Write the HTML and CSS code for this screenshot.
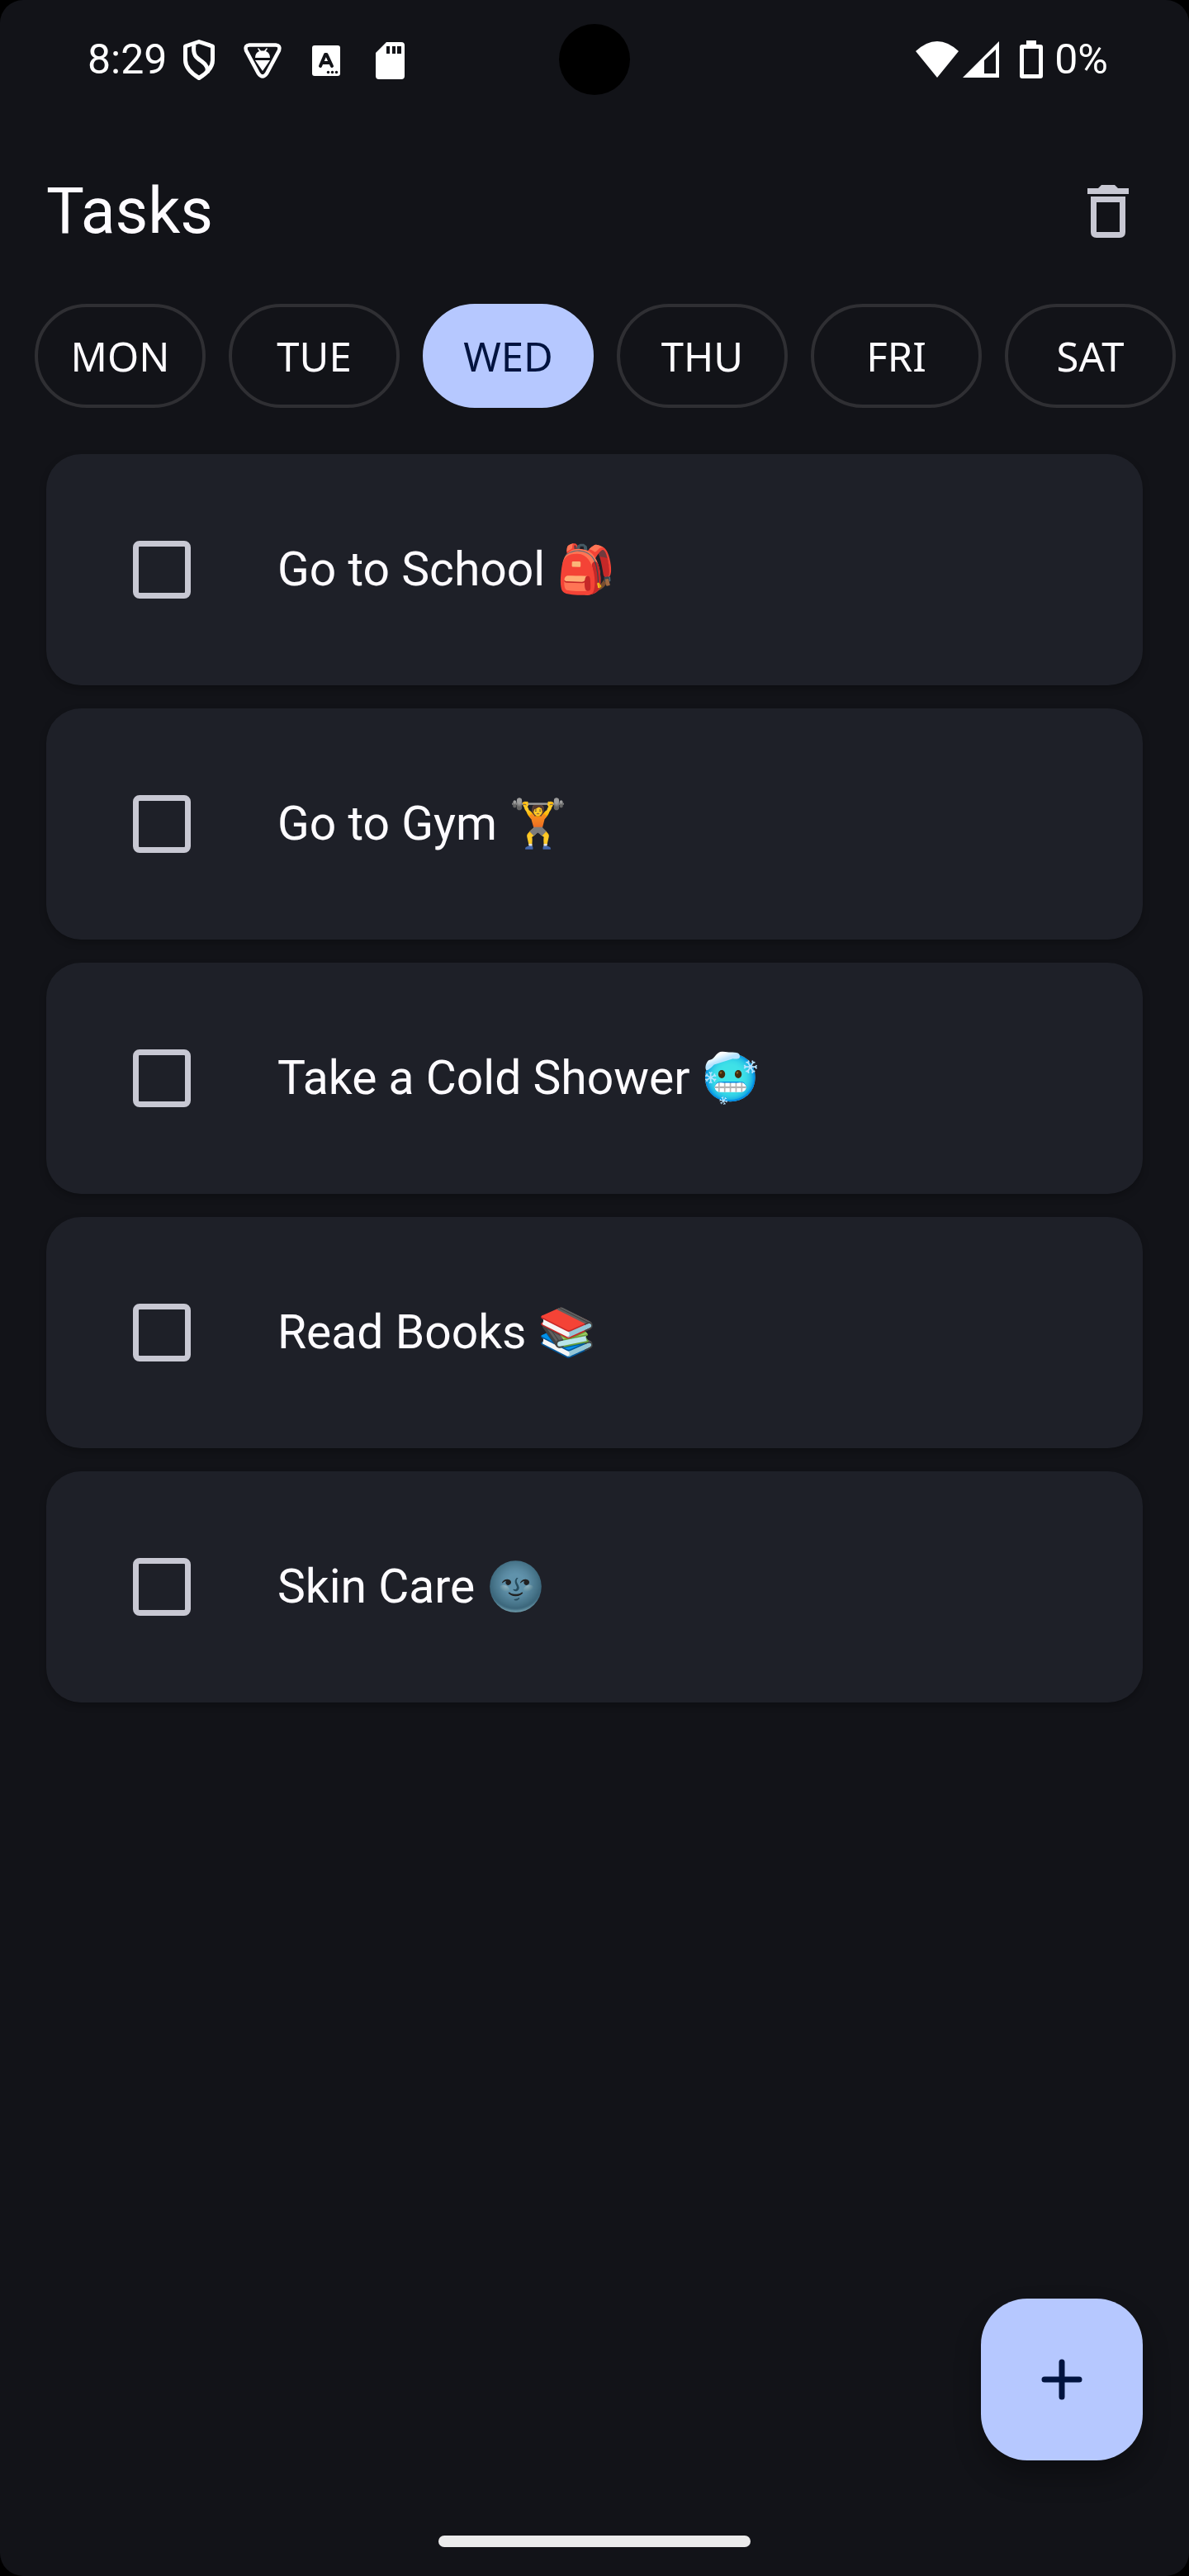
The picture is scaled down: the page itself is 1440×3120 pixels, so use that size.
FILE: index.html
```html
<!DOCTYPE html>
<html lang="en">
<head>
<meta charset="utf-8">
<title>Tasks</title>
<meta name="viewport" content="width=device-width, initial-scale=1">
<link rel="stylesheet" href="styles.css">
</head>
<body>
<div class="screen">
  <div class="status-bar">
    <div class="status-left">
      <span class="status-text">8:29</span>
      <svg class="status-icon" viewBox="0 0 52 52" fill="none" stroke="#fff" stroke-width="5" stroke-linejoin="round" aria-hidden="true">
        <path d="M26 4.500 42.500 10V27C42.500 36 35 43 26 48.500 17 43 9.500 36 9.500 27V10Z"/>
        <path d="M20 8C18 21 23 24 29 28 36 33 37 37 36 42"/>
      </svg>
      <svg class="status-icon" viewBox="0 0 52 52" aria-hidden="true">
        <path d="M10 8.500H42Q48 9 46 15L31 43Q26 50 21 43L6 15Q4 9 10 8.500Z" fill="none" stroke="#fff" stroke-width="4.500"/>
        <path d="M17 24Q17 18 22 16L20 13 21 12 24 15.500H28L31 12 32 13 30 16Q35 18 35 24ZM17 27H35L26 40Z" fill="#fff"/>
      </svg>
      <svg class="status-icon" viewBox="0 0 52 52" aria-hidden="true">
        <rect x="9" y="9" width="34" height="37" rx="3" fill="#fff"/>
        <path d="M19 34 25 20H26.500L33 34M21.500 30H30" fill="none" stroke="#121318" stroke-width="4" stroke-linecap="round" stroke-linejoin="round"/>
        <g fill="#121318"><circle cx="28.500" cy="41.500" r="1.700"/><circle cx="33.500" cy="41.500" r="1.700"/><circle cx="38.500" cy="41.500" r="1.700"/></g>
      </svg>
      <svg class="status-icon" viewBox="0 0 52 52" aria-hidden="true">
        <path fill="#fff" fill-rule="evenodd" d="M22 5H40Q44 5 44 9V46Q44 50 40 50H13Q9 50 9 46V18ZM22 10V19H26V10ZM29 10V19H33V10ZM35 10V19H40V10Z"/>
      </svg>
    </div>
    <div class="camera"></div>
    <div class="status-right">
      <svg class="wifi" viewBox="0 0 54 46" aria-hidden="true"><path fill="#fff" d="M1 13Q27-11 53 13L27 45Z"/></svg>
      <svg class="signal" viewBox="0 0 46 46" aria-hidden="true"><path fill="#fff" fill-rule="evenodd" d="M1 45 45 1V45ZM27 24V40H41V11Z"/></svg>
      <svg class="battery" viewBox="0 0 28 46" aria-hidden="true"><path fill="#fff" fill-rule="evenodd" d="M8 0H20V5H25Q28 5 28 8V43Q28 46 25 46H3Q0 46 0 43V8Q0 5 3 5H8ZM5 10V41H23V10Z"/></svg>
      <span class="status-text">0%</span>
    </div>
  </div>

  <header class="app-bar">
    <h1 class="title">Tasks</h1>
    <button class="icon-button" type="button" aria-label="Delete tasks">
      <svg viewBox="0 0 84 84" aria-hidden="true"><path fill="#c8c8d3" fill-rule="evenodd" d="M17 14H30L34 10H50L54 14H67V21H17ZM21 24H63V67Q63 74 56 74H28Q21 74 21 67ZM28 31V67H56V31Z"/></svg>
    </button>
  </header>

  <nav class="days" aria-label="Day">
    <button class="day" type="button">MON</button>
    <button class="day" type="button">TUE</button>
    <button class="day day-selected" type="button" aria-pressed="true">WED</button>
    <button class="day" type="button">THU</button>
    <button class="day" type="button">FRI</button>
    <button class="day" type="button">SAT</button>
  </nav>

  <main class="tasks">
    <label class="task"><input class="check" type="checkbox"><span>Go to School 🎒</span></label>
    <label class="task"><input class="check" type="checkbox"><span>Go to Gym 🏋️</span></label>
    <label class="task"><input class="check" type="checkbox"><span>Take a Cold Shower 🥶</span></label>
    <label class="task"><input class="check" type="checkbox"><span>Read Books 📚</span></label>
    <label class="task"><input class="check" type="checkbox"><span>Skin Care 🌚</span></label>
  </main>

  <footer class="bottom">
    <button class="fab" type="button" aria-label="Add task">
      <svg viewBox="0 0 84 84" aria-hidden="true"><path d="M42 21V63M21 42H63" stroke="#00133f" stroke-width="7" stroke-linecap="round"/></svg>
    </button>
    <div class="home-handle"></div>
  </footer>
</div>
</body>
</html>
```
FILE: styles.css
```css
* { box-sizing: border-box; }
html { background: #000; }
body { margin: 0; font-family: Roboto, "Noto Color Emoji", sans-serif; color: #fdfbff; }
button { padding: 0; border: 0; background: none; font: inherit; color: inherit; }
svg { display: block; }

.screen { min-height: 100vh; display: flex; flex-direction: column; background: #121318; border-radius: 28px; overflow: hidden; }

.status-bar { height: 144px; padding: 0 98px; display: grid; grid-template-columns: 1fr 86px 1fr; align-items: center; color: #fff; }
.status-left, .status-right { display: flex; align-items: center; }
.status-left { gap: 25px; padding-left: 8px; }
.status-right { justify-content: flex-end; }
.status-text { font-size: 50px; line-height: 60px; }
.status-left .status-text { margin-right: -12px; }
.status-icon { width: 52px; height: 52px; flex: none; }
.camera { width: 86px; height: 86px; border-radius: 50%; background: #000; }
.wifi { width: 54px; height: 46px; }
.signal { width: 46px; height: 46px; margin: 0 24px 0 3px; }
.battery { width: 28px; height: 46px; margin-right: 14px; }

.app-bar { height: 224px; padding: 0 56px; display: flex; align-items: center; justify-content: space-between; }
.title { margin: 0; font-size: 77px; line-height: 98px; font-weight: 400; }
.icon-button { width: 84px; height: 84px; }

.days { display: flex; gap: 28px; padding: 0 0 0 42px; overflow: hidden; }
.day { flex: none; width: 207px; height: 126px; border: 4px solid #2f2f33; border-radius: 63px; font-family: "Noto Sans", sans-serif; font-size: 49px; line-height: 70px; }
.day-selected { background: #b6c8ff; border-color: #b6c8ff; color: #00133f; }

.tasks { display: flex; flex-direction: column; gap: 28px; padding: 56px 56px 0; }
.task { display: flex; align-items: center; gap: 105px; min-height: 280px; padding: 0 105px; border-radius: 42px; background: #1e2028; box-shadow: 0 4px 8px rgba(0, 0, 0, .25); font-size: 57px; line-height: 84px; }
.check { appearance: none; flex: none; margin: 0; width: 70px; height: 70px; border: 7px solid #c8c8d3; border-radius: 8px; }

.bottom { margin-top: auto; display: flex; flex-direction: column; padding: 56px 56px 35px; }
.fab { align-self: flex-end; width: 196px; height: 196px; margin-bottom: 91px; border-radius: 56px; background: #b6c8ff; display: grid; place-items: center; box-shadow: 0 18px 32px rgba(0, 0, 0, .3); }
.fab svg { width: 84px; height: 84px; }
.home-handle { align-self: center; width: 378px; height: 14px; border-radius: 7px; background: #ebebeb; }
```
